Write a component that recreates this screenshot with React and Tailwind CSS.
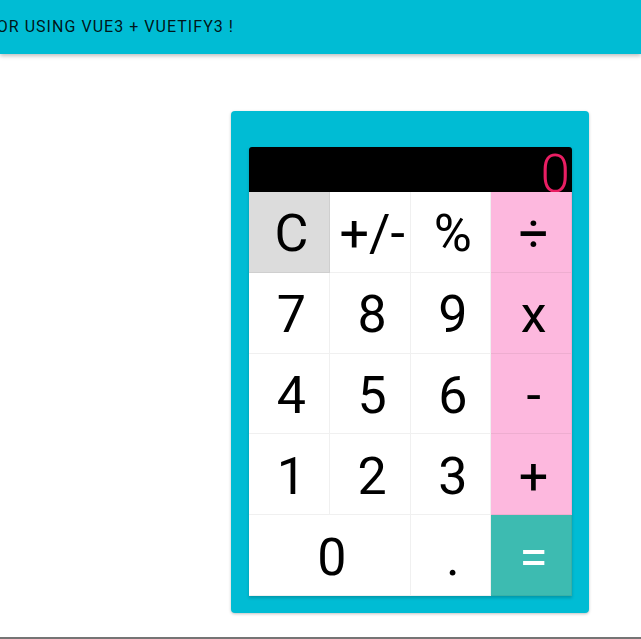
const keys = [
  { label: "C", tone: "clear" },
  { label: "+/-", tone: "num" },
  { label: "%", tone: "num" },
  { label: "÷", tone: "op" },
  { label: "7", tone: "num" },
  { label: "8", tone: "num" },
  { label: "9", tone: "num" },
  { label: "x", tone: "op" },
  { label: "4", tone: "num" },
  { label: "5", tone: "num" },
  { label: "6", tone: "num" },
  { label: "-", tone: "op" },
  { label: "1", tone: "num" },
  { label: "2", tone: "num" },
  { label: "3", tone: "num" },
  { label: "+", tone: "op" },
  { label: "0", tone: "num", wide: true },
  { label: ".", tone: "num" },
  { label: "=", tone: "eq" },
]

const tones = {
  num: "bg-white text-black",
  clear: "bg-[#dcdcdc] text-black",
  op: "bg-[#fdb8de] text-black",
  eq: "bg-[#3dbbb1] text-white",
}

function Key({ label, tone, wide }) {
  return (
    <button
      className={`flex items-center justify-center pl-[4px] pt-[4px] text-[52px] leading-none shadow-[inset_-1px_-1px_0_rgba(0,0,0,0.06)] ${tones[tone]} ${wide ? "col-span-2" : ""}`}
    >
      {label}
    </button>
  )
}

export default function App() {
  return (
    <div className="min-h-[639px] bg-white font-['Roboto','Liberation_Sans',sans-serif]">
      <header className="h-[54px] bg-[#00bcd4] shadow-[0_2px_4px_rgba(0,0,0,0.25)] flex items-center">
        <div className="w-[234px] overflow-hidden flex justify-end">
          <span className="whitespace-nowrap text-[16px] tracking-[0.065em] text-black/90">
            SIMPLE CALCULATOR USING VUE3 + VUETIFY3 !
          </span>
        </div>
      </header>

      <div className="ml-[231px] mt-[57px] w-[358px] h-[502px] rounded-[4px] bg-[#00bcd4] shadow-[0_1px_3px_rgba(0,0,0,0.25)] pt-[36px] pl-[18px]">
        <div className="w-[323px] shadow-[0_2px_3px_rgba(0,0,0,0.2)]">
          <div className="h-[45px] bg-black rounded-t-[3px] flex justify-end pr-[2px]">
            <span className="text-[53px] leading-[54px] font-light text-[#e91e63] h-[45px]">0</span>
          </div>
          <div className="grid grid-cols-4 grid-rows-5 h-[404px]">
            {keys.map((k, i) => (
              <Key key={i} {...k} />
            ))}
          </div>
        </div>
      </div>

      <div className="mt-[24px] h-[2px] bg-[#757575]" />
    </div>
  )
}
